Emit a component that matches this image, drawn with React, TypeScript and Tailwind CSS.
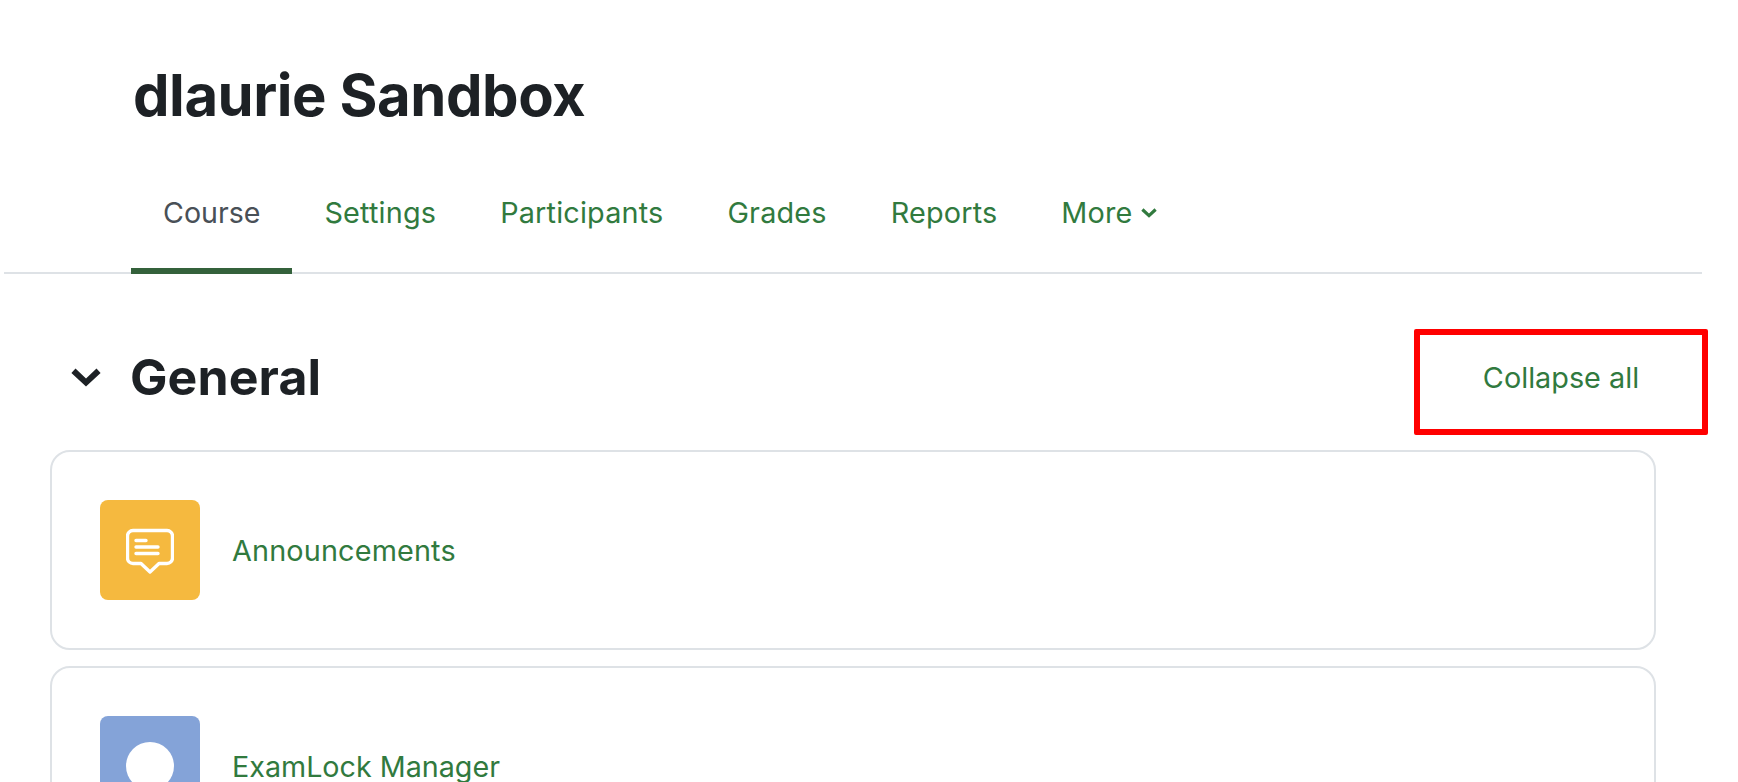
const tabs = ['Settings', 'Participants', 'Grades', 'Reports'];

function TabLink({ label }: { label: string }) {
  return (
    <a className="flex h-full items-center px-8 pb-3 text-[28.8px] tracking-[0.18px] text-[#317a3e]">
      {label}
    </a>
  );
}

function Chevron({ className }: { className: string }) {
  return (
    <svg viewBox="0 0 30 19" className={className} fill="currentColor">
      <path d="M4.5 0.6L15 10.4L25.5 0.6L29.6 5L15 18.6L0.4 5Z" />
    </svg>
  );
}

function ForumIcon() {
  return (
    <svg viewBox="0 0 48 48" className="h-12 w-12" fill="none" stroke="white" strokeWidth="3.4" strokeLinecap="round" strokeLinejoin="round">
      <path d="M7 4.5H41A5.5 5.5 0 0 1 46.5 10V32A5.5 5.5 0 0 1 41 37.5H33L24 46L15 37.5H7A5.5 5.5 0 0 1 1.5 32V10A5.5 5.5 0 0 1 7 4.5Z" />
      <path d="M10 14.5H20M10 21H32M10 27.5H32" />
    </svg>
  );
}

export default function App() {
  return (
    <div className="h-[782px] w-full overflow-hidden bg-white font-['Inter',sans-serif]">
      <header className="pl-[133px] pt-[55px]">
        <h1 className="text-[58px] font-bold leading-[80px] tracking-[-0.45px] text-[#1d2125]">dlaurie Sandbox</h1>
      </header>

      <nav className="ml-1 mt-[31px] flex h-[108px] w-[1698px] items-stretch border-b-2 border-[#dee2e6] pl-[127px]">
        <a className="-mb-0.5 flex items-center border-b-[6px] border-[#34613b] px-8 pb-2 text-[28.6px] text-[#495057]">Course</a>
        {tabs.map((tab) => (
          <TabLink key={tab} label={tab} />
        ))}
        <a className="flex items-center gap-2 px-8 pb-3 text-[28.8px] tracking-[0.18px] text-[#317a3e]">
          More
          <Chevron className="h-[10px] w-4" />
        </a>
      </nav>

      <section className="mt-[55px] flex w-[1708px] items-center justify-between pl-[71px]">
        <div className="flex items-center gap-[29px] pb-[10px]">
          <Chevron className="h-[19px] w-[30px] text-[#1d2125]" />
          <h2 className="text-[50px] font-bold leading-[60px] tracking-[0.1px] text-[#1d2125]">General</h2>
        </div>
        <a className="flex h-[106px] w-[294px] items-center justify-center rounded-[2px] border-[6px] border-[#ff0000] pb-[8px] text-[28.8px] text-[#317a3e]">
          Collapse all
        </a>
      </section>

      <div className="ml-[50px] mt-[15px] flex w-[1606px] flex-col gap-4">
        <div className="flex h-[200px] items-center gap-8 rounded-[20px] border-2 border-[#dee2e6] pl-12">
          <div className="flex h-[100px] w-[100px] items-center justify-center rounded-lg bg-[#f5b93f]">
            <ForumIcon />
          </div>
          <a className="pt-[2px] text-[28.8px] tracking-[0.15px] text-[#317a3e]">Announcements</a>
        </div>
        <div className="flex h-[200px] items-center gap-8 rounded-[20px] border-2 border-[#dee2e6] pl-12">
          <div className="flex h-[100px] w-[100px] items-center justify-center rounded-lg bg-[#84a3d8]">
            <div className="h-12 w-12 rounded-full bg-white" />
          </div>
          <a className="pt-[2px] text-[28.7px] text-[#317a3e]">ExamLock Manager</a>
        </div>
      </div>
    </div>
  );
}
